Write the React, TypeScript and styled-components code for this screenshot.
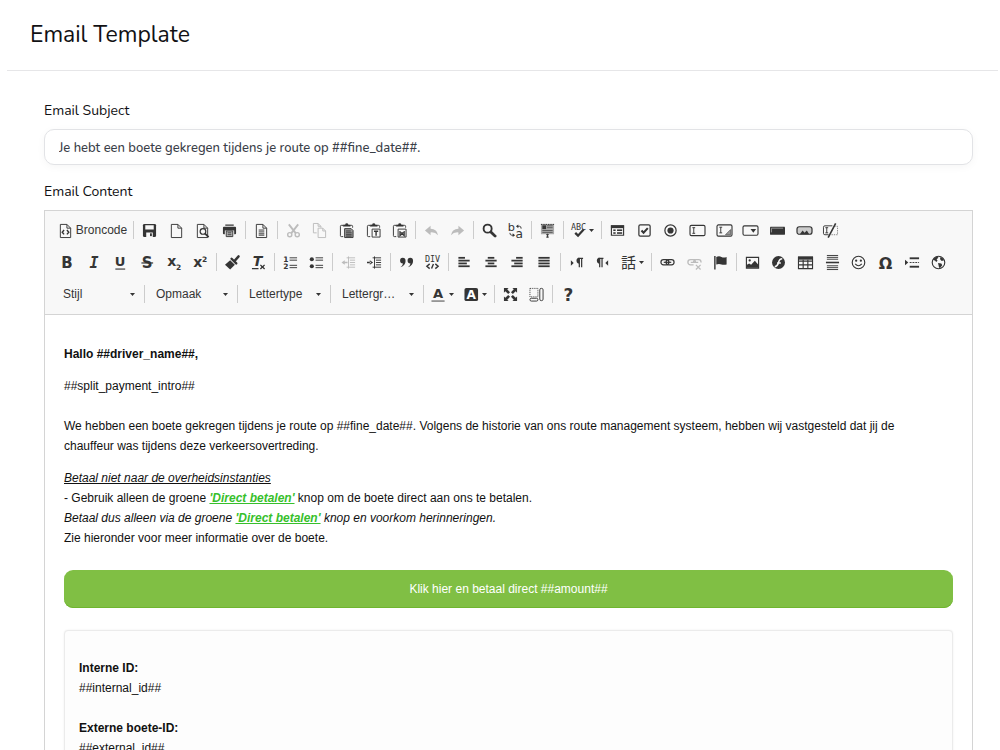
import React from 'react';
import styled, { createGlobalStyle } from 'styled-components';

const ui = 'Nunito, Lato, "Open Sans", sans-serif';
const arial = '"Liberation Sans", Arial, sans-serif';
const ink = '#353535';

const GlobalStyle = createGlobalStyle`
  *, *::before, *::after { box-sizing: border-box; }
  body { margin: 0; background: #fff; color: #1b1b1f; font-family: ${ui}; }
`;

const Page = styled.main`
  height: 100vh;
  overflow: hidden;
`;

const Header = styled.header`
  margin: 0 2px 0 7px;
  padding: 19px 23px;
  border-bottom: 1px solid #e6e6e8;
`;

const Title = styled.h1`
  margin: 0;
  font-size: 23px;
  line-height: 32px;
  font-weight: 400;
  color: #111114;
`;

const Form = styled.form`
  padding: 30px 27px 0 44px;
`;

const Label = styled.label`
  display: block;
  font-size: 14px;
  line-height: 20px;
  color: #111114;
`;

const SubjectInput = styled.input`
  display: block;
  width: 100%;
  height: 36px;
  margin: 8px 0 17px;
  padding: 2px 14px 0;
  border: 1px solid #e2e3e6;
  border-radius: 10px;
  background: #fff;
  box-shadow: 0 2px 8px rgba(0, 0, 0, 0.04);
  font-family: ${ui};
  font-size: 13px;
  font-weight: 500;
  color: #3a4048;
  outline: none;
`;

const Editor = styled.section`
  margin-top: 8px;
  border: 1px solid #d4d4d4;
  background: #fff;
`;

const Toolbar = styled.div`
  padding: 3px 9px 4px;
  border-bottom: 1px solid #d4d4d4;
  background: #f8f8f8;
`;

const ToolRow = styled.div`
  display: flex;
  align-items: center;
  height: 32px;
`;

const Group = styled.div<{ $width: number }>`
  display: flex;
  flex: 0 0 auto;
  width: ${(p) => p.$width}px;
`;

const Divider = styled.span`
  flex: 0 0 auto;
  width: 1px;
  height: 18px;
  margin: 0 2px;
  background: #cccccc;
`;

const ToolButton = styled.button<{ $faded?: boolean; $wide?: boolean }>`
  display: flex;
  flex: ${(p) => (p.$wide ? '0 0 33px' : '1 1 0')};
  min-width: 0;
  align-items: center;
  justify-content: center;
  gap: 3px;
  height: 26px;
  padding: 0;
  border: 0;
  background: none;
  color: ${ink};
  font-family: ${arial};
  font-size: 12px;
  opacity: ${(p) => (p.$faded ? 0.3 : 1)};
`;

const Glyph = styled.svg`
  flex: 0 0 auto;
  width: 15px;
  height: 15px;
  overflow: visible;
  fill: none;
  stroke: currentColor;
`;

const Caret = styled.svg`
  flex: 0 0 auto;
  width: 5px;
  height: 3px;
  fill: ${ink};
`;

const Combo = styled.div`
  display: flex;
  flex: 0 0 88px;
  align-items: center;
  padding: 0 7px 0 9px;
`;

const ComboSelect = styled.select`
  flex: 1;
  min-width: 0;
  height: 26px;
  padding: 0;
  border: 0;
  background: none;
  appearance: none;
  font-family: ${arial};
  font-size: 12px;
  color: ${ink};
`;

const Body = styled.article`
  padding: 29px 19px;
  font-family: ${arial};
  font-size: 12px;
  line-height: 20px;
  color: #111;
`;

const Para = styled.p`
  margin: 0 0 12px;
`;

const Intro = styled(Para)`
  margin-bottom: 20px;
`;

const Green = styled.em`
  font-weight: 700;
  color: #37c02b;
  text-decoration: underline;
`;

const PayLink = styled.a`
  display: block;
  margin: 22px 0;
  padding: 9px;
  border-radius: 9px;
  background: #80bf44;
  box-shadow: inset 0 -1px 0 #6fb52f;
  color: #fff;
  text-align: center;
  text-decoration: none;
`;

const Card = styled.div`
  padding: 27px 14px;
  border: 1px solid #ebebeb;
  border-radius: 4px;
  background: #fdfdfd;
  box-shadow: 0 0 2px rgba(0, 0, 0, 0.08);
`;

const Facts = styled.dl`
  margin: 0;
`;

const Term = styled.dt`
  font-weight: 700;
`;

const Value = styled.dd`
  margin: 0 0 20px;
`;

type TProps = { x: number; y: number; s: number; f?: string; b?: boolean; i?: boolean; children: string };
const T = ({ x, y, s, f = 'DejaVu Sans', b = true, i, children }: TProps) => (
  <text x={x} y={y} fontSize={s} fontFamily={`"${f}", sans-serif`} fontWeight={b ? 700 : 400}
    fontStyle={i ? 'italic' : 'normal'} textAnchor="middle" fill="currentColor" stroke="none">{children}</text>
);

const page = <path d="M2.5 1.5h7l4 4v10h-11zM9.5 1.5v4h4" />;
const clip = (
  <>
    <path d="M4.5 14.5h-2q-1 0-1-1v-10q0-1 1-1h2M12 2.5h1.500q1 0 1 1V5" />
    <path d="M4.500 3.500V2h2q.3-1.500 1.750-1.500T10 2h2v1.500z" fill="currentColor" strokeWidth="0.500" />
  </>
);
const filled = { fill: 'currentColor', stroke: 'none' };
const lines = (rows: [number, number, number][], w = 1) =>
  rows.map(([x, y, l]) => <path key={`${x}-${y}`} d={`M${x} ${y}h${l}`} strokeWidth={w} />);

const icons: Record<string, React.ReactNode> = {
  source: <>{page}<path d="M6.500 7.500 4.500 9.800l2 2.300M9.500 7.500l2 2.300-2 2.300" strokeWidth="1.500" /></>,
  save: <><path d="M2.500 1h11q1.500 0 1.500 1.500v11q0 1.500-1.500 1.500h-11Q1 15 1 13.500v-11Q1 1 2.500 1z" {...filled} />
    <path d="M3.500 2.500h9v4.500h-9zM4.500 10h7v5h-7z" fill="#f8f8f8" stroke="none" /><path d="M8.500 11h2v3h-2z" {...filled} /></>,
  newpage: page,
  preview: <>{page}<circle cx="8.500" cy="9" r="3" strokeWidth="1.300" /><path d="m10.500 11 4 4" strokeWidth="2" /></>,
  print: <><path d="M3.500 1.500h9V3h-9zM2 4h12q1 0 1 1v6q0 1-1 1h-1V8H3v4H2q-1 0-1-1V5q0-1 1-1z" {...filled} />
    <path d="M4.500 8.500h7v6h-7z" fill="#bbb" />{lines([[6, 10.5, 4], [6, 12.5, 4]])}</>,
  template: <>{page}{lines([[5, 7.5, 6], [5, 9.5, 6], [5, 11.5, 6], [5, 13, 6]])}</>,
  cut: <><path d="m3 1.500 7.500 9.500M13 1.500 5.500 11" strokeWidth="2" /><circle cx="4" cy="12.500" r="2.200" strokeWidth="1.500" /><circle cx="12" cy="12.500" r="2.200" strokeWidth="1.500" /></>,
  copy: <><path d="M5 10.500H1.500v-10h5l3 3V5M6.500.5v3h3" /><path d="M6.500 5.500h5l3 3v7h-8zM11.500 5.500v3h3" fill="#f8f8f8" /></>,
  paste: <>{clip}<path d="M6 6h7l2 2v7.500H6z" fill="#999" />{lines([[7.5, 8.5, 5], [7.5, 10.5, 6], [7.5, 12.5, 6], [7.5, 14, 6]])}</>,
  pastetext: <>{clip}<path d="M6.500 6.500h8.500v8.500H6.500z" fill="#f8f8f8" /><path d="M8.500 8.800h4.500M10.750 9v4.500" strokeWidth="1.500" /></>,
  pasteword: <>{clip}<path d="M6.500 6.500h8.500v8.500H6.500z" fill="#f8f8f8" /><path d="M8.500 8.500v5l2.250-2 2.250 2v-5M8.500 10.500H13" strokeWidth="1.300" /></>,
  undo: <path d="m1 8 6-5v3q7 0 8 7-3-3.500-8-3v3z" {...filled} />,
  redo: <path d="M15 8 9 3v3q-7 0-8 7 3-3.500 8-3v3z" {...filled} />,
  find: <><circle cx="6" cy="6" r="4.300" strokeWidth="2" /><path d="m9.500 9.500 4.500 4.500" strokeWidth="3" strokeLinecap="round" /></>,
  replace: <><T x={3.5} y={8} s={12} b={false}>b</T><T x={12} y={15.5} s={13} b={false}>a</T>
    <path d="M10 3.500h2.500q1.500 0 1.500 2.500M2 10.500q0 2.500 2 2.500h2.500" /><path d="m8.500 3.500 2.500-2v4zM7.500 13 5 11v4z" {...filled} /></>,
  selectall: <><path d="M1 1h14v11H1z" fill="#aaa" stroke="none" /><path d="M2.500 2.500h4v4h-4z" {...filled} />
    {lines([[7.5, 3, 6], [7.5, 5, 6], [2.5, 8, 11], [2.5, 10, 11]], 0.7)}<path d="M1 1.500h14" strokeDasharray="1.500 1" /><path d="M8 11.500v4M6.500 15h3M6.500 12.500h3" /></>,
  spell: <><T x={8} y={7.5} s={9} b={false} f="DejaVu Sans Mono">ABC</T><path d="m4.500 10.500 3 3 6-6.500" strokeWidth="2.400" /></>,
  form: <><path d="M1.500 3h13v10h-13z" strokeWidth="1.200" /><path d="M1 2.500h14V5.500H1z" {...filled} />{lines([[3.5, 7.7, 2.5], [7.5, 7.7, 5.5], [3.5, 10.7, 2.5], [7.5, 10.7, 5.5]], 1.7)}</>,
  checkbox: <><rect x="2" y="2" width="12" height="12" rx="1.500" strokeWidth="1.300" /><path d="m4.800 8 2.200 2.300 4.500-4.800" strokeWidth="2.200" /></>,
  radio: <><circle cx="8" cy="8" r="6" strokeWidth="1.300" /><circle cx="8" cy="8" r="3.300" {...filled} /></>,
  textfield: <><rect x="0" y="2.500" width="16" height="11" rx="1.500" strokeWidth="1.200" /><path d="M2.500 5h3M2.500 11h3M4 5v6" /></>,
  textarea: <><rect x="0" y="2" width="16" height="12" rx="1.500" strokeWidth="1.200" /><path d="M2.500 4.500h3M2.500 10.500h3M4 4.500v6" /><path d="M14.500 7v5.500H9z" fill="#999" strokeWidth=".6" /></>,
  selectbox: <><rect x="0" y="3" width="16" height="10" rx="1.500" strokeWidth="1.200" /><path d="M8 6.500h6l-3 4z" {...filled} /></>,
  button: <><rect x="0" y="4" width="16" height="8.500" rx=".5" {...filled} /><path d="M1.500 5.500h12.500M1.500 5.500V10" stroke="#999" /></>,
  imagebutton: <><rect x="0" y="4" width="16" height="8" rx="2.500" fill="#ccc" strokeWidth="1.300" /><path d="m3 12 3-4 2 2.500L10.500 8l2.500 4z" {...filled} /></>,
  hidden: <><path d="M10 3H2Q.5 3 .5 4.500V11q0 1.500 1.500 1.500h4" /><path d="M12 3.500h3.500v9H9" strokeDasharray="1.500 1" strokeOpacity=".6" /><path d="M2.500 5h3M2.500 10.500h3M4 5v5.500" /><path d="m5.500 15.500 8-15" strokeWidth="1.700" /></>,
  bold: <T x={7.500} y={14} s={16}>B</T>,
  italic: <T x={7.500} y={14} s={16} i f="DejaVu Sans Mono">I</T>,
  underline: <><T x={7.500} y={12} s={14}>U</T><path d="M2.500 15h10.500" strokeWidth="1.200" /></>,
  strike: <><T x={7.500} y={14} s={16}>S</T><path d="M1.500 8.500h12.500" strokeWidth="1.300" /></>,
  sub: <><T x={5} y={12} s={15}>x</T><T x={12.500} y={15.500} s={8}>2</T></>,
  sup: <><T x={5} y={13} s={15}>x</T><T x={12.500} y={7.500} s={8}>2</T></>,
  brush: <><path d="m0 10.500 5.500-5 5 5-5 5z" {...filled} /><path d="m7 4 5 5M10 6.500l4.500-5" strokeWidth="2.600" strokeLinecap="round" /></>,
  clear: <><T x={7} y={12} s={15} i>T</T><path d="M1 14.500h7M10 10.500l4.500 4.500M14.500 10.500 10 15" strokeWidth="1.400" /></>,
  ol: <><T x={3} y={7} s={8}>1</T><T x={3} y={15} s={8}>2</T>{lines([[7, 3, 8], [7, 5.5, 8], [7, 11, 8], [7, 13.5, 8]])}</>,
  ul: <><circle cx="3" cy="4.500" r="2.200" {...filled} /><circle cx="3" cy="12" r="2.200" {...filled} />{lines([[7, 3, 8], [7, 5.5, 8], [7, 11, 8], [7, 13.5, 8]])}</>,
  outdent: <><path d="M.5 8 4 5.500v5zM3 7.300h4v1.500H3z" {...filled} /><path d="M8 1.500v13" />{lines([[6, 3, 9], [9.5, 5.5, 5.5], [9.5, 8, 5.5], [9.5, 10.5, 5.5], [6, 13, 9]])}</>,
  indent: <><path d="M6.500 8 3 5.500v5zM0 7.300h4v1.500H0z" {...filled} /><path d="M8 1.500v13" />{lines([[6, 3, 9], [9.5, 5.5, 5.5], [9.5, 8, 5.5], [9.5, 10.5, 5.5], [6, 13, 9]])}</>,
  quote: <path d="M4 3a3 3 0 1 0 .3 6Q4 11 1.500 13 7 11.500 7 6.500 7 3 4 3zM12 3a3 3 0 1 0 .3 6Q12 11 9.500 13 15 11.500 15 6.500 15 3 12 3z" {...filled} />,
  div: <><T x={8} y={7} s={9} b={false} f="DejaVu Sans Mono">DIV</T><path d="m5 9.500-3 2.500 3 2.500M11 9.500l3 2.500-3 2.500M9 9.500l-2 5" strokeWidth="1.500" /></>,
  left: lines([[1.5, 3, 7], [1.5, 6, 12], [1.5, 9, 9], [1.5, 12, 12]], 1.9),
  center: lines([[4, 3, 7], [1.5, 6, 12], [4, 9, 7], [1.5, 12, 12]], 1.9),
  right: lines([[6.5, 3, 7], [1.5, 6, 12], [4.5, 9, 9], [1.5, 12, 12]], 1.9),
  justify: lines([[1.5, 3, 12], [1.5, 6, 12], [1.5, 9, 12], [1.5, 12, 12]], 1.9),
  ltr: <><path d="m2 5.500 3 3-3 3z" {...filled} /><path d="M11 3.500v9.500M13.500 3.500v9.500M9.500 3.500h5.500" strokeWidth="1.300" /><path d="M11 3v6a3 3 0 1 1 0-6z" {...filled} /></>,
  rtl: <><path d="m14 5.500-3 3 3 3z" {...filled} /><path d="M5 3.500v9.500M7.500 3.500v9.500M3.500 3.500H9" strokeWidth="1.300" /><path d="M5 3v6a3 3 0 1 1 0-6z" {...filled} /></>,
  language: <T x={8} y={13.500} s={16} b={false} f="Noto Sans CJK JP">話</T>,
  link: <><rect x="1" y="5" width="8.500" height="5.500" rx="2.700" strokeWidth="1.300" /><rect x="6.500" y="5" width="8.500" height="5.500" rx="2.700" strokeWidth="1.300" /><path d="M4 7.800h8" strokeWidth="1.300" /></>,
  unlink: <><path d="M7 10.500H3.700a2.700 2.700 0 0 1 0-5.500h3Q9 5 9 7.500M7 8q0-3 2.500-3h3q2.500 0 2.500 3M4 7.800h8" strokeWidth="1.400" /><path d="m9.500 10.500 5 5M14.500 10.500l-5 5" strokeWidth="1.300" /></>,
  anchor: <><path d="M2 1v14.500" strokeWidth="1.500" /><path d="M3.500 2q3-1.500 5.500 0T14.500 2v8q-3 1-5.500 0T3.500 10z" {...filled} /></>,
  image: <><path d="M1.500 2.500h13v11.500h-13z" strokeWidth="1.200" /><circle cx="5" cy="5.800" r="1.200" {...filled} /><path d="M2 13.500v-3L4.500 9l2 1.500 4-4.500 3.500 4v3.500z" {...filled} /></>,
  flash: <><circle cx="8" cy="8" r="6.900" {...filled} /><path d="M12 4q-3 0-4 4t-4 4.500M6.500 8.500h4" stroke="#f8f8f8" strokeWidth="1.700" /></>,
  table: <><path d="M.5 2.500h15v12H.5zM.5 6.500h15M.5 10.500h15M5.500 5v9.500M10.500 5v9.500" strokeWidth="1.200" /><path d="M0 1.500h16V5H0z" {...filled} /></>,
  rule: <>{lines([[2, .5, 12], [2, 2.5, 12], [2, 4.5, 12], [2, 11.5, 12], [2, 13.5, 12], [2, 15.5, 12]])}<path d="M1 8h14" strokeWidth="1.700" /></>,
  smiley: <><circle cx="8" cy="8" r="6.700" strokeWidth="1.200" /><circle cx="5.500" cy="6" r="1.200" {...filled} /><circle cx="10.500" cy="6" r="1.200" {...filled} /><path d="M4.500 9.500q3.500 4 7 0" strokeWidth="1.200" /></>,
  omega: <T x={8} y={14.500} s={17}>Ω</T>,
  pagebreak: <><path d="m0 5 3.500 3L0 11z" {...filled} />{lines([[5, 3.5, 10], [5, 12.5, 10]], 2)}<path d="M5 8h10" strokeDasharray="2 1" /></>,
  iframe: <><circle cx="8" cy="8" r="6.700" strokeWidth="1.200" /><path d="M2 5q1.500-2.500 4.500-3.500L8 3 6 4.500 7 6 5.500 7.500l-1-1.500zM9.500 2.500l3 1 1.500 2-2.500 1L10 5zM7.500 8.500l3.500.5 1 2-2.500 3-1-1z" {...filled} /></>,
  color: <><T x={7.500} y={11.500} s={14}>A</T><path d="M.5 15h14" stroke="#777" strokeWidth="1.500" /></>,
  bgcolor: <><rect x=".5" y="1" width="14.500" height="14" rx="2" {...filled} /><text x="7.800" y="12.700" fontSize="13" fontWeight="700" fontFamily="DejaVu Sans" textAnchor="middle" fill="#fff" stroke="none">A</text></>,
  maximize: <><path d="M1 1h5L4.500 2.500l3 3-2 2-3-3L1 6zM15 1v5l-1.500-1.500-3 3-2-2 3-3L10 1zM1 15v-5l1.500 1.500 3-3 2 2-3 3L6 15zM15 15h-5l1.500-1.500-3-3 2-2 3 3L15 10z" {...filled} /></>,
  blocks: <><path d="M1 1.500h8.500v9H1z" strokeDasharray="1 1" /><rect x="11.500" y="1.500" width="3.500" height="13" rx="1.500" /><rect x="1" y="12" width="8.500" height="3" rx="1.500" /></>,
  about: <T x={8} y={14.500} s={18}>?</T>,
};

type Tool = { icon: string; name: string; faded?: boolean; caret?: boolean; text?: string };
const t = (icon: string, name: string, more: Partial<Tool> = {}): Tool => ({ icon, name, ...more });

const rowOne: Tool[][] = [
  [t('source', 'Broncode', { text: 'Broncode' })],
  [t('save', 'Opslaan'), t('newpage', 'Nieuwe pagina'), t('preview', 'Voorbeeld'), t('print', 'Afdrukken')],
  [t('template', 'Sjablonen')],
  [t('cut', 'Knippen', { faded: true }), t('copy', 'Kopiëren', { faded: true }), t('paste', 'Plakken'), t('pastetext', 'Plakken als tekst'), t('pasteword', 'Plakken vanuit Word')],
  [t('undo', 'Ongedaan maken', { faded: true }), t('redo', 'Opnieuw', { faded: true })],
  [t('find', 'Zoeken'), t('replace', 'Vervangen')],
  [t('selectall', 'Alles selecteren')],
  [t('spell', 'Spellingscontrole', { caret: true })],
  [t('form', 'Formulier'), t('checkbox', 'Selectievakje'), t('radio', 'Keuzerondje'), t('textfield', 'Tekstveld'), t('textarea', 'Tekstvak'), t('selectbox', 'Selectieveld'), t('button', 'Knop'), t('imagebutton', 'Afbeeldingsknop'), t('hidden', 'Verborgen veld')],
];

const rowTwo: Tool[][] = [
  [t('bold', 'Vet'), t('italic', 'Cursief'), t('underline', 'Onderstrepen'), t('strike', 'Doorhalen'), t('sub', 'Subscript'), t('sup', 'Superscript')],
  [t('brush', 'Opmaak kopiëren'), t('clear', 'Opmaak verwijderen')],
  [t('ol', 'Genummerde lijst'), t('ul', 'Opsomming')],
  [t('outdent', 'Inspringing verkleinen', { faded: true }), t('indent', 'Inspringing vergroten')],
  [t('quote', 'Citaatblok'), t('div', 'DIV')],
  [t('left', 'Links uitlijnen'), t('center', 'Centreren'), t('right', 'Rechts uitlijnen'), t('justify', 'Uitvullen')],
  [t('ltr', 'Links naar rechts'), t('rtl', 'Rechts naar links'), t('language', 'Taal', { caret: true })],
  [t('link', 'Link'), t('unlink', 'Link verwijderen', { faded: true }), t('anchor', 'Interne link')],
  [t('image', 'Afbeelding'), t('flash', 'Flash'), t('table', 'Tabel'), t('rule', 'Horizontale lijn'), t('smiley', 'Smiley'), t('omega', 'Speciale tekens'), t('pagebreak', 'Pagina-einde'), t('iframe', 'IFrame')],
];

const rowThree: Tool[][] = [
  [t('color', 'Tekstkleur', { caret: true }), t('bgcolor', 'Achtergrondkleur', { caret: true })],
  [t('maximize', 'Maximaliseren'), t('blocks', 'Toon blokken')],
  [t('about', 'Over')],
];

const combos = ['Stijl', 'Opmaak', 'Lettertype', 'Lettergr…'];

const DownCaret = () => <Caret viewBox="0 0 5 3" aria-hidden="true"><path d="M0 0h5L2.500 3z" /></Caret>;

const groupWidth = (tools: Tool[]) => {
  if (tools[0].text) return 77;
  const wide = tools.filter((x) => x.caret).length;
  return wide * 33 + Math.round(((tools.length - wide) * 80) / 3);
};

const Groups = ({ groups }: { groups: Tool[][] }) => (
  <>
    {groups.map((tools, i) => (
      <React.Fragment key={tools[0].icon}>
        {i > 0 && <Divider />}
        <Group $width={groupWidth(tools)} role="group">
          {tools.map((tool) => (
            <ToolButton key={tool.icon} type="button" aria-label={tool.name} title={tool.name} $faded={tool.faded} $wide={tool.caret}>
              <Glyph viewBox="0 0 16 16" aria-hidden="true">{icons[tool.icon]}</Glyph>
              {tool.text}
              {tool.caret && <DownCaret />}
            </ToolButton>
          ))}
        </Group>
      </React.Fragment>
    ))}
  </>
);

export default function App() {
  return (
    <Page>
      <GlobalStyle />
      <Header>
        <Title>Email Template</Title>
      </Header>
      <Form>
        <Label htmlFor="subject">Email Subject</Label>
        <SubjectInput id="subject" type="text" defaultValue="Je hebt een boete gekregen tijdens je route op ##fine_date##." />
        <Label as="div" id="content-label">Email Content</Label>
        <Editor aria-labelledby="content-label">
          <Toolbar role="toolbar" aria-label="Editor">
            <ToolRow><Groups groups={rowOne} /></ToolRow>
            <ToolRow><Groups groups={rowTwo} /></ToolRow>
            <ToolRow>
              {combos.map((name) => (
                <React.Fragment key={name}>
                  <Combo>
                    <ComboSelect aria-label={name}><option>{name}</option></ComboSelect>
                    <DownCaret />
                  </Combo>
                  <Divider />
                </React.Fragment>
              ))}
              <Groups groups={rowThree} />
            </ToolRow>
          </Toolbar>
          <Body>
            <Para><strong>Hallo ##driver_name##,</strong></Para>
            <Intro>##split_payment_intro##</Intro>
            <Para>
              We hebben een boete gekregen tijdens je route op ##fine_date##. Volgens de historie van ons route management
              systeem, hebben wij vastgesteld dat jij de<br />
              chauffeur was tijdens deze verkeersovertreding.
            </Para>
            <Para>
              <u><em>Betaal niet naar de overheidsinstanties</em></u><br />
              - Gebruik alleen de groene <Green>'Direct betalen'</Green> knop om de boete direct aan ons te betalen.<br />
              <em>Betaal dus alleen via de groene <Green>'Direct betalen'</Green> knop en voorkom herinneringen.</em><br />
              Zie hieronder voor meer informatie over de boete.
            </Para>
            <PayLink href="#betaal">Klik hier en betaal direct ##amount##</PayLink>
            <Card>
              <Facts>
                <Term>Interne ID:</Term>
                <Value>##internal_id##</Value>
                <Term>Externe boete-ID:</Term>
                <Value>##external_id##</Value>
              </Facts>
            </Card>
          </Body>
        </Editor>
      </Form>
    </Page>
  );
}
